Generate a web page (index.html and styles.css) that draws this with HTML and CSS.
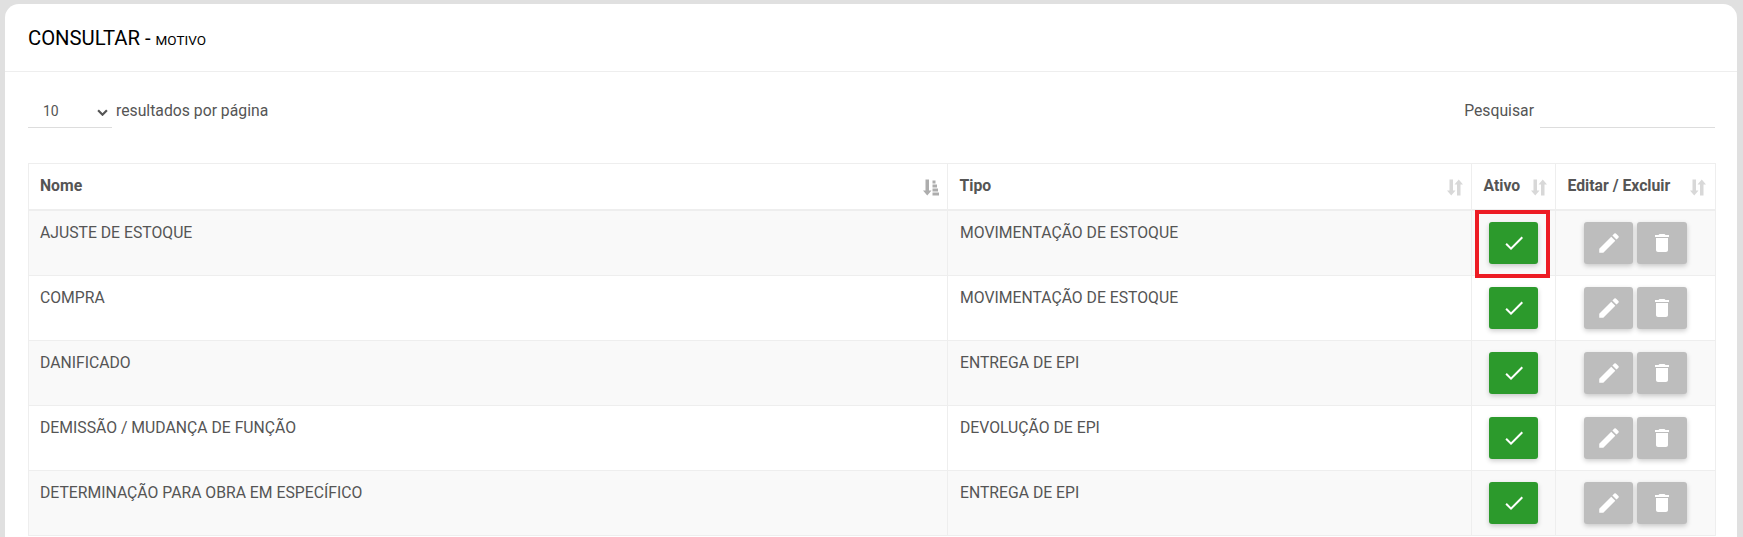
FILE: index.html
```html
<!DOCTYPE html>
<html lang="pt-BR">
<head>
  <meta charset="UTF-8">
  <meta name="viewport" content="width=device-width, initial-scale=1">
  <title>Consultar - Motivo</title>
  <link rel="stylesheet" href="styles.css">
</head>
<body>

<svg class="sprite" width="0" height="0" aria-hidden="true">
  <symbol id="i-sort" viewBox="0 0 16 16">
    <path d="M2.500 0h3.500v11h2.500L4.250 16 0 11h2.500z"/>
    <path d="M10 5H7.500L11.750 0 16 5h-2.500v11H10z"/>
  </symbol>
  <symbol id="i-sort-asc" viewBox="0 0 16 16">
    <path d="M2.500 0h3.500v11h2.500L4.250 16 0 11h2.500z"/>
    <path d="M9.500 1h3v3h-3zM9.500 5h4.500v3h-4.500zM9.500 9h5.500v3h-5.500zM9.500 13h6.500v3h-6.500z"/>
  </symbol>
  <symbol id="i-check" viewBox="0 0 24 24">
    <path d="M9 16.170 4.830 12l-1.420 1.410L9 19 21 7l-1.410-1.410z"/>
  </symbol>
  <symbol id="i-edit" viewBox="0 0 24 24">
    <path d="M3 17.250V21h3.750L17.810 9.940l-3.750-3.750L3 17.250zM20.710 7.040a1 1 0 0 0 0-1.410l-2.340-2.340a1 1 0 0 0-1.410 0l-1.830 1.830 3.750 3.750 1.830-1.830z"/>
  </symbol>
  <symbol id="i-trash" viewBox="0 0 24 24">
    <path d="M6 19c0 1.100.9 2 2 2h8c1.100 0 2-.9 2-2V7H6v12zM19 4h-3.500l-1-1h-5l-1 1H5v2h14V4z"/>
  </symbol>
</svg>

<div class="card">
  <div class="card-header">
    <h4>CONSULTAR - <small>MOTIVO</small></h4>
  </div>

  <div class="card-body">
    <div class="table-tools">
      <label class="page-size">
        <span class="select">10 <svg viewBox="0 0 10 6" width="11" height="7"><path d="M1 1l4 4 4-4" fill="none" stroke="#555" stroke-width="2"/></svg></span>
        resultados por página
      </label>
      <label class="search">
        Pesquisar
        <span class="search-input"></span>
      </label>
    </div>

    <table class="grid">
      <thead>
        <tr>
          <th class="col-nome"><div class="th-in">Nome <svg class="sort active"><use href="#i-sort-asc"/></svg></div></th>
          <th class="col-tipo"><div class="th-in">Tipo <svg class="sort"><use href="#i-sort"/></svg></div></th>
          <th class="col-ativo"><div class="th-in">Ativo <svg class="sort"><use href="#i-sort"/></svg></div></th>
          <th class="col-acoes"><div class="th-in">Editar / Excluir <svg class="sort"><use href="#i-sort"/></svg></div></th>
        </tr>
      </thead>
      <tbody>
        <tr>
          <td>AJUSTE DE ESTOQUE</td>
          <td>MOVIMENTAÇÃO DE ESTOQUE</td>
          <td class="center marked"><button class="btn btn-green"><svg><use href="#i-check"/></svg></button></td>
          <td class="center"><button class="btn btn-grey"><svg class="pen"><use href="#i-edit"/></svg></button><button class="btn btn-grey"><svg><use href="#i-trash"/></svg></button></td>
        </tr>
        <tr>
          <td>COMPRA</td>
          <td>MOVIMENTAÇÃO DE ESTOQUE</td>
          <td class="center"><button class="btn btn-green"><svg><use href="#i-check"/></svg></button></td>
          <td class="center"><button class="btn btn-grey"><svg class="pen"><use href="#i-edit"/></svg></button><button class="btn btn-grey"><svg><use href="#i-trash"/></svg></button></td>
        </tr>
        <tr>
          <td>DANIFICADO</td>
          <td>ENTREGA DE EPI</td>
          <td class="center"><button class="btn btn-green"><svg><use href="#i-check"/></svg></button></td>
          <td class="center"><button class="btn btn-grey"><svg class="pen"><use href="#i-edit"/></svg></button><button class="btn btn-grey"><svg><use href="#i-trash"/></svg></button></td>
        </tr>
        <tr>
          <td>DEMISSÃO / MUDANÇA DE FUNÇÃO</td>
          <td>DEVOLUÇÃO DE EPI</td>
          <td class="center"><button class="btn btn-green"><svg><use href="#i-check"/></svg></button></td>
          <td class="center"><button class="btn btn-grey"><svg class="pen"><use href="#i-edit"/></svg></button><button class="btn btn-grey"><svg><use href="#i-trash"/></svg></button></td>
        </tr>
        <tr>
          <td>DETERMINAÇÃO PARA OBRA EM ESPECÍFICO</td>
          <td>ENTREGA DE EPI</td>
          <td class="center"><button class="btn btn-green"><svg><use href="#i-check"/></svg></button></td>
          <td class="center"><button class="btn btn-grey"><svg class="pen"><use href="#i-edit"/></svg></button><button class="btn btn-grey"><svg><use href="#i-trash"/></svg></button></td>
        </tr>
      </tbody>
    </table>
  </div>
</div>

</body>
</html>
```

FILE: styles.css
```css
html, body {
  height: 100%;
  overflow: hidden;
}
body {
  margin: 0;
  padding: 4px 6px 0 5px;
  box-sizing: border-box;
  background-color: #e0e0e0;
  font-family: Roboto, "Liberation Sans", sans-serif;
  font-size: 15.750px;
  color: #555;
}
.sprite {
  display: block;
}
.card {
  background: #fff;
  border-radius: 14px 14px 0 0;
  min-height: 600px;
}
.card-header {
  height: 68px;
  box-sizing: border-box;
  padding: 23px 23px 0;
  border-bottom: 1px solid #eee;
}
.card-header h4 {
  margin: 0;
  font-size: 20.250px;
  font-weight: 400;
  line-height: 22px;
  color: #000;
}
.card-header small {
  font-size: 13.500px;
}
.card-body {
  padding: 0 22px 0 23px;
}
.table-tools {
  display: flex;
  justify-content: space-between;
  padding-top: 29px;
  height: 91px;
  box-sizing: border-box;
}
.table-tools label {
  display: flex;
  align-items: flex-start;
  line-height: 20px;
}
.select {
  width: 84px;
  height: 27px;
  box-sizing: border-box;
  padding: 0 4px 0 15px;
  margin-right: 4px;
  display: flex;
  justify-content: space-between;
  align-items: flex-start;
  border-bottom: 1px solid #ddd;
  font-size: 14px;
  line-height: 20px;
}
.select svg {
  margin-top: 8px;
}
.search-input {
  width: 175px;
  height: 27px;
  box-sizing: border-box;
  margin-left: 6px;
  border-bottom: 1px solid #ddd;
}
.grid {
  width: 1687px;
  border-collapse: collapse;
  table-layout: fixed;
}
.grid th,
.grid td {
  border: 1px solid #eee;
  text-align: left;
  vertical-align: top;
}
.grid th {
  height: 46px;
  box-sizing: border-box;
  padding: 12px 8px 0 11.500px;
  font-weight: 700;
  line-height: 20px;
  border-bottom-width: 2px;
}
.grid th:last-child {
  padding-right: 9px;
}
.grid td {
  height: 65px;
  box-sizing: border-box;
  padding: 12px 11px 0 12px;
  line-height: 20px;
}
.grid tbody tr:first-child td {
  height: 66px;
}
.grid th:first-child,
.grid td:first-child {
  padding-left: 11px;
}
.grid tbody tr:nth-child(odd) {
  background-color: #f9f9f9;
}
.col-nome { width: 919px; }
.col-tipo { width: 524px; }
.col-ativo { width: 84px; }
.col-acoes { width: 160px; }
.th-in {
  display: flex;
  justify-content: space-between;
}
.sort {
  flex: none;
  width: 16px;
  height: 17px;
  margin-top: 3px;
  fill: #d8d8d8;
}
.sort.active {
  fill: #adadad;
}
.grid td.center {
  padding: 11px 0 0;
  text-align: center;
}
.grid td.marked {
  position: relative;
}
/* destaque vermelho por cima da celula */
.grid td.marked::after {
  content: "";
  position: absolute;
  top: -1px;
  right: 5px;
  bottom: -3px;
  left: 3px;
  border: 4px solid #ed1c24;
  pointer-events: none;
}
.btn {
  width: 49px;
  height: 42px;
  padding: 0;
  border: none;
  border-radius: 3px;
  cursor: pointer;
  vertical-align: top;
  box-shadow: 0 2px 5px rgba(0,0,0,0.2);
}
.btn svg {
  display: block;
  margin: 0 auto;
  width: 24px;
  height: 24px;
  fill: #fff;
}
.btn svg.pen {
  width: 26px;
  height: 26px;
}
.btn-green {
  background-color: #2c9a2c;
}
.btn-grey {
  background-color: #bdbdbd;
}
.btn-grey + .btn-grey {
  margin-left: 4px;
  width: 50px;
}
```
